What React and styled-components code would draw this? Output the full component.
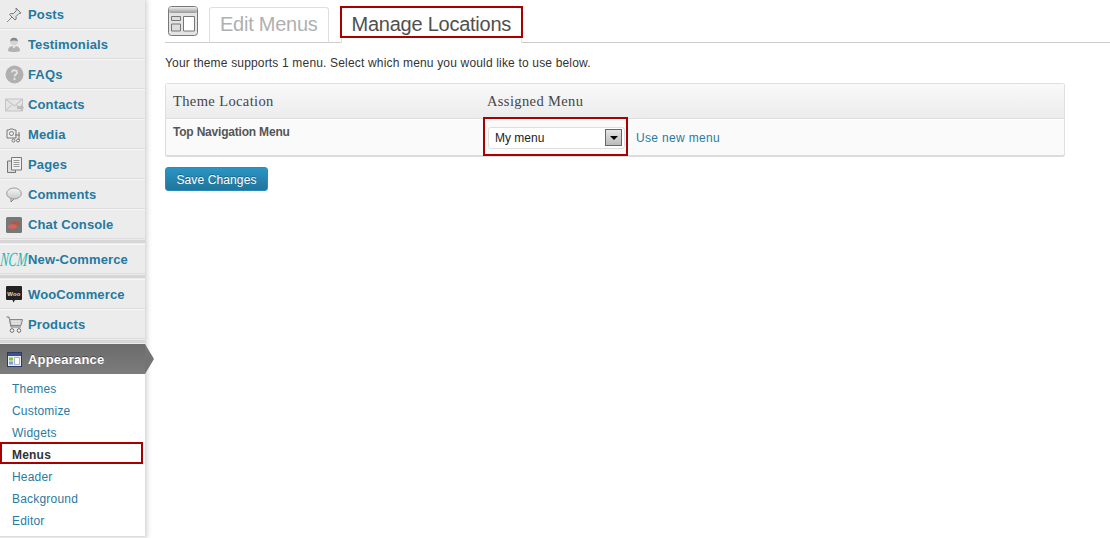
import React from 'react';
import styled, { createGlobalStyle } from 'styled-components';

const Global = createGlobalStyle`
  html, body {
    margin: 0;
    padding: 0;
    height: 538px;
    overflow: hidden;
    background: #fff;
    font-family: "Liberation Sans", Arial, sans-serif;
  }
`;

const Page = styled.div`
  display: flex;
  height: 538px;
  overflow: hidden;
`;

const Sidebar = styled.nav`
  width: 145px;
  height: 540px;
  flex: none;
  margin-top: -1px;
  background: #ececec;
  box-shadow: 1px 0 6px rgba(0, 0, 0, 0.24);
  position: relative;
`;

const Item = styled.a`
  display: flex;
  align-items: center;
  height: 30px;
  box-sizing: border-box;
  padding-top: 2px;
  border-bottom: 1px solid #dcdcdc;
  box-shadow: inset 0 1px 0 #f7f7f7;
  font-size: 13px;
  letter-spacing: 0.14px;
  font-weight: bold;
  color: #2479a0;
  position: relative;
`;

const IconSlot = styled.span`
  width: 28px;
  height: 28px;
  flex: none;
  display: flex;
  align-items: center;
  justify-content: center;
`;

const Separator = styled.div`
  height: 3px;
  margin-bottom: 1px;
  background: #d6d6d6;
  border-top: 1px solid #ececec;
`;

const NcmLogo = styled.span`
  font-family: "Liberation Serif", serif;
  font-style: italic;
  font-size: 20px;
  font-weight: normal;
  color: #1cb5b5;
  transform: scaleX(0.62) skewX(-8deg);
  white-space: nowrap;
`;

const ActiveItem = styled.a`
  display: flex;
  align-items: center;
  height: 30px;
  background: linear-gradient(to bottom, #6b6b6b, #7c7c7c);
  font-size: 13px;
  letter-spacing: 0.2px;
  font-weight: bold;
  color: #fff;
  position: relative;
  text-shadow: 0 -1px 0 rgba(0, 0, 0, 0.4);

  &::after {
    content: '';
    position: absolute;
    left: 145px;
    top: 0;
    width: 9px;
    height: 30px;
    background: #747474;
    clip-path: polygon(0 0, 100% 50%, 0 100%);
  }
`;

const SubMenu = styled.ul`
  list-style: none;
  margin: 0;
  padding: 4px 0 4px;
  background: #fff;
  border-bottom: 1px solid #dcdcdc;
`;

const SubItem = styled.li`
  height: 22px;
  line-height: 23px;
  padding-left: 12px;
  font-size: 12px;
  letter-spacing: 0.2px;
  color: ${p => (p.$current ? '#333' : '#2a7ba1')};
  font-weight: ${p => (p.$current ? 'bold' : 'normal')};
  position: relative;

  ${p => p.$current && `
    &::after {
      content: '';
      position: absolute;
      left: 0;
      top: -2px;
      width: 143px;
      height: 22px;
      box-sizing: border-box;
      border: 2px solid #a80000;
    }
  `}
`;

const Main = styled.main`
  flex: 1;
  padding: 6px 0 0 20px;
  min-width: 0;
`;

const TabBar = styled.div`
  display: flex;
  align-items: flex-end;
  height: 36px;
  border-bottom: 1px solid #ccc;
  padding-left: 3px;
`;

const ScreenIcon = styled.span`
  width: 30px;
  height: 36px;
  margin-right: 11px;
  flex: none;
`;

const Tab = styled.a`
  display: block;
  height: 36px;
  box-sizing: border-box;
  padding: 4px 10px 0;
  margin: 0 12px -1px 0;
  font-size: 20px;
  line-height: 24px;
  letter-spacing: -0.25px;
  border: 1px solid #dfdfdf;
  border-radius: 3px 3px 0 0;
  color: ${p => (p.$active ? '#4f4f4f' : '#b0b0b0')};
  border-bottom-color: ${p => (p.$active ? '#fff' : '#ccc')};
  position: relative;

  ${p => p.$active && `
    &::after {
      content: '';
      position: absolute;
      left: -2px;
      right: -2px;
      top: -2px;
      height: 32px;
      box-sizing: border-box;
      border: 2px solid #a80000;
    }
  `}
`;

const Intro = styled.p`
  margin: 13px 0 0;
  font-size: 12px;
  line-height: 14px;
  letter-spacing: 0.17px;
  color: #333;
`;

const Table = styled.div`
  width: 900px;
  box-sizing: border-box;
  margin-top: 13px;
  border: 1px solid #dfdfdf;
  border-bottom: 2px solid #dcdcdc;
  border-radius: 3px;
  background: #fafafa;
`;

const Row = styled.div`
  display: grid;
  grid-template-columns: 314px 1fr;
`;

const HeadRow = styled(Row)`
  height: 34px;
  align-items: center;
  background: linear-gradient(to bottom, #f9f9f9, #ececec);
  border-bottom: 1px solid #dfdfdf;
  font-family: "Liberation Serif", Georgia, serif;
  font-size: 14.5px;
  letter-spacing: 0.38px;
  color: #464646;
`;

const HeadCell = styled.div`
  padding-left: 7px;
`;

const BodyRow = styled(Row)`
  height: 35px;
  border-top: 1px solid #fff;
`;

const LocationName = styled.div`
  padding: 5px 0 0 7px;
  font-size: 12px;
  line-height: 14px;
  letter-spacing: -0.2px;
  font-weight: bold;
  color: #555;
`;

const AssignCell = styled.div`
  display: flex;
  align-items: center;
  padding-left: 8px;
  height: 37px;
  margin-top: -1px;
`;

const SelectBox = styled.div`
  width: 137px;
  height: 22px;
  margin-right: 11px;
  box-sizing: border-box;
  display: flex;
  align-items: center;
  justify-content: space-between;
  padding: 0 2px 0 6px;
  background: #fff;
  border: 1px solid #dfdfdf;
  border-radius: 3px;
  font-size: 12px;
  color: #222;
  position: relative;

  &::after {
    content: '';
    position: absolute;
    left: -6px;
    right: -4px;
    top: -11px;
    bottom: -8px;
    border: 2px solid #a80000;
    pointer-events: none;
  }
`;

const SelectArrow = styled.span`
  width: 17px;
  height: 17px;
  box-sizing: border-box;
  border: 1px solid #666;
  background: linear-gradient(to bottom, #e4e4e4, #bbb);
  display: flex;
  align-items: center;
  justify-content: center;

  &::before {
    content: '';
    border-style: solid;
    border-width: 4px 4px 0;
    border-color: #000 transparent transparent;
  }
`;

const PlainLink = styled.a`
  font-size: 12px;
  letter-spacing: 0.33px;
  color: #2a7ba1;
`;

const SaveButton = styled.button`
  display: block;
  margin-top: 10px;
  width: 103px;
  height: 24px;
  padding: 1px 0 0;
  border: 1px solid #298cba;
  border-radius: 3px;
  background: linear-gradient(to bottom, #2a95c5, #21759b);
  color: #fff;
  font-family: inherit;
  font-size: 12px;
  letter-spacing: 0.12px;
  text-shadow: 0 -1px 0 rgba(0, 0, 0, 0.3);
`;

const Pin = () => (
  <svg width="16" height="16" viewBox="0 0 16 16">
    <path d="M1 15l5-5" stroke="#888" strokeWidth="1" />
    <path d="M10 1l5 5-2 .5-3 3 .2 2.500L9 13 3.500 7.500l1.200-1 2.600.2 3-3z" fill="#e4e4e4" stroke="#777" strokeWidth="1" />
  </svg>
);

const Person = () => (
  <svg width="16" height="17" viewBox="0 0 16 17">
    <circle cx="8" cy="5.500" r="3.800" fill="#d4d4d4" />
    <path d="M4.200 5.500a3.800 3.800 0 0 1 7.600 0c-2-1.200-5.600-1.200-7.600 0z" fill="#888" />
    <path d="M2 15c0-4 2.500-5 6-5s6 1 6 5c-3 1.300-9 1.300-12 0z" fill="#b2b2b2" />
    <path d="M6 10.300l2 2.200 2-2.200z" fill="#eee" />
  </svg>
);

const Faq = () => (
  <svg width="19" height="19" viewBox="0 0 19 19">
    <circle cx="9.500" cy="9.500" r="9" fill="#b0b0b0" />
    <path d="M7 7.500c0-3 5-3 5 0 0 2-2.500 2-2.500 4" fill="none" stroke="#e2e2e2" strokeWidth="1.800" />
    <circle cx="9.500" cy="14" r="1.200" fill="#e2e2e2" />
  </svg>
);

const Mail = () => (
  <svg width="19" height="14" viewBox="0 0 19 14">
    <path d="M.5 1h17v12H.5z" fill="#e4e4e4" stroke="#c4c4c4" />
    <path d="M.5 1l9 7 8-7M.5 13l6-6M17.500 13l-6-6" fill="none" stroke="#bbb" />
    <path d="M12 8h4V6l3 3.500-3 3.500v-2h-4z" fill="#bdbdbd" />
  </svg>
);

const Media = () => (
  <svg width="16" height="16" viewBox="0 0 16 16">
    <path d="M1 3h2l1-1h3l1 1h2v8H1z" fill="#eee" stroke="#777" />
    <circle cx="5.500" cy="6.500" r="2" fill="none" stroke="#777" />
    <path d="M13 5v8M9 8h5" stroke="#777" />
    <circle cx="7.500" cy="13.500" r="1.500" fill="none" stroke="#777" />
    <circle cx="12" cy="13.500" r="1.500" fill="none" stroke="#777" />
  </svg>
);

const Pages = () => (
  <svg width="15" height="16" viewBox="0 0 15 16">
    <path d="M.5 4h8v11.500h-8z" fill="#ddd" stroke="#777" />
    <path d="M4.500.5h10v12.500h-10z" fill="#f2f2f2" stroke="#777" />
    <path d="M6.500 3.500h6M6.500 5.500h6M6.500 7.500h6M6.500 9.500h6" stroke="#999" />
  </svg>
);

const Bubble = () => (
  <svg width="16" height="16" viewBox="0 0 16 16">
    <defs>
      <linearGradient id="bubbleFill" x1="0" y1="0" x2="0" y2="1">
        <stop offset="0" stopColor="#f6f6f6" />
        <stop offset="1" stopColor="#c8c8c8" />
      </linearGradient>
    </defs>
    <path d="M5 11.500v3.500l3-3" fill="#ddd" stroke="#888" />
    <ellipse cx="8" cy="6.500" rx="7.300" ry="5.500" fill="url(#bubbleFill)" stroke="#999" />
  </svg>
);

const Chat = () => (
  <svg width="16" height="16" viewBox="0 0 16 16">
    <rect width="16" height="16" rx="1.500" fill="#777" />
    <ellipse cx="9.500" cy="6.500" rx="4.500" ry="2.300" fill="#b0584f" />
    <ellipse cx="6.500" cy="9.500" rx="4.500" ry="2.300" fill="#d2665a" />
  </svg>
);

const Woo = () => (
  <svg width="16" height="17" viewBox="0 0 16 17">
    <path d="M1 0h14a1 1 0 0 1 1 1v12a1 1 0 0 1-1 1H9l-1.500 2.500L6.500 14H1a1 1 0 0 1-1-1V1a1 1 0 0 1 1-1z" fill="#222" />
    <text x="8" y="9.500" textAnchor="middle" fontSize="6" fill="#ddd" fontFamily="Liberation Sans, sans-serif">Woo</text>
  </svg>
);

const Cart = () => (
  <svg width="17" height="17" viewBox="0 0 17 17">
    <path d="M.5 1H3l2 10h10" fill="none" stroke="#777" />
    <path d="M3.500 3.500h13l-1.500 6H5z" fill="#ccc" stroke="#888" />
    <path d="M5 5.500h10M5.500 7.500h9M7 4v5M10 4v5M13 4v5" stroke="#eee" strokeWidth=".7" />
    <circle cx="6" cy="14.500" r="1.800" fill="#fff" stroke="#666" />
    <circle cx="13" cy="14.500" r="1.800" fill="#fff" stroke="#666" />
  </svg>
);

const AppearanceIcon = () => (
  <svg width="15" height="15" viewBox="0 0 15 15">
    <rect x=".5" y=".5" width="14" height="14" fill="#e8eef5" stroke="#2b3a66" />
    <path d="M1 1h13v3H1z" fill="#3f4f8f" />
    <path d="M2 5.500h4v3H2z" fill="#8dbb55" />
    <path d="M2 9.500h4v3H2z" fill="#7aa0d0" />
    <path d="M7.500 5.500h5v7h-5z" fill="#fff" stroke="#7a8ab0" strokeWidth=".6" />
  </svg>
);

const ScreenGlyph = () => (
  <svg width="30" height="31" viewBox="0 0 30 31">
    <defs>
      <linearGradient id="screenHead" x1="0" y1="0" x2="0" y2="1">
        <stop offset="0" stopColor="#eee" />
        <stop offset="1" stopColor="#999" />
      </linearGradient>
    </defs>
    <rect x=".5" y=".5" width="29" height="29" rx="3" fill="#e4e4e4" stroke="#777" />
    <rect x="1" y="1" width="28" height="6" rx="2" fill="url(#screenHead)" />
    <path d="M3.500 10.500h9v4h-9zM3.500 18h9v7h-9z" fill="#ddd" stroke="#777" />
    <path d="M15.500 10.500h11v14.500h-11z" fill="#fff" stroke="#777" />
  </svg>
);

const groups = [
  [
    { label: 'Posts', icon: <Pin /> },
    { label: 'Testimonials', icon: <Person /> },
    { label: 'FAQs', icon: <Faq /> },
    { label: 'Contacts', icon: <Mail /> },
    { label: 'Media', icon: <Media /> },
    { label: 'Pages', icon: <Pages /> },
    { label: 'Comments', icon: <Bubble /> },
    { label: 'Chat Console', icon: <Chat /> },
  ],
  [{ label: 'New-Commerce', icon: <NcmLogo>NCM</NcmLogo> }],
  [
    { label: 'WooCommerce', icon: <Woo /> },
    { label: 'Products', icon: <Cart /> },
  ],
];

const subItems = ['Themes', 'Customize', 'Widgets', 'Menus', 'Header', 'Background', 'Editor'];

export default function App() {
  return (
    <>
      <Global />
      <Page>
        <Sidebar>
          {groups.map((group, i) => (
            <React.Fragment key={i}>
              {group.map(item => (
                <Item key={item.label}>
                  <IconSlot>{item.icon}</IconSlot>
                  {item.label}
                </Item>
              ))}
              <Separator />
            </React.Fragment>
          ))}
          <ActiveItem>
            <IconSlot><AppearanceIcon /></IconSlot>
            Appearance
          </ActiveItem>
          <SubMenu>
            {subItems.map(label => (
              <SubItem key={label} $current={label === 'Menus'}>{label}</SubItem>
            ))}
          </SubMenu>
        </Sidebar>
        <Main>
          <TabBar>
            <ScreenIcon><ScreenGlyph /></ScreenIcon>
            <Tab>Edit Menus</Tab>
            <Tab $active>Manage Locations</Tab>
          </TabBar>
          <Intro>Your theme supports 1 menu. Select which menu you would like to use below.</Intro>
          <Table>
            <HeadRow>
              <HeadCell>Theme Location</HeadCell>
              <HeadCell>Assigned Menu</HeadCell>
            </HeadRow>
            <BodyRow>
              <LocationName>Top Navigation Menu</LocationName>
              <AssignCell>
                <SelectBox>
                  My menu
                  <SelectArrow />
                </SelectBox>
                <PlainLink>Use new menu</PlainLink>
              </AssignCell>
            </BodyRow>
          </Table>
          <SaveButton>Save Changes</SaveButton>
        </Main>
      </Page>
    </>
  );
}
